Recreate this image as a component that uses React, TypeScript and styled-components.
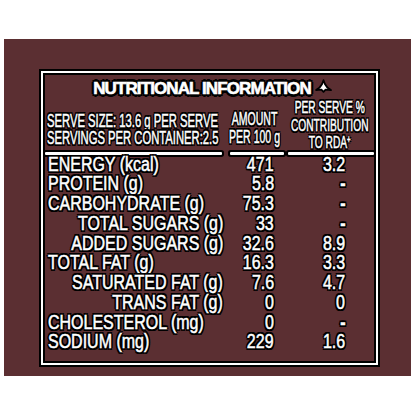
import React from "react";
import styled, { createGlobalStyle } from "styled-components";

const GlobalStyle = createGlobalStyle`
  html, body {
    margin: 0;
    padding: 0;
    background: #ffffff;
  }
`;

const BROWN = "#5b2f32";

const outline = (w: number) => {
  const d = +(w * 0.72).toFixed(2);
  return [
    `${w}px 0 #000`,
    `-${w}px 0 #000`,
    `0 ${w}px #000`,
    `0 -${w}px #000`,
    `${d}px ${d}px #000`,
    `-${d}px ${d}px #000`,
    `${d}px -${d}px #000`,
    `-${d}px -${d}px #000`,
  ].join(", ");
};

const Panel = styled.div`
  box-sizing: border-box;
  margin: 39px 0 0 4px;
  width: 407px;
  height: 337px;
  padding: 32px 0 0 37px;
  background: ${BROWN};
`;

const Frame = styled.div`
  box-sizing: border-box;
  width: 337px;
  height: 294px;
  border: 2px solid #fff;
  box-shadow: 0 0 0 2px #000, inset 0 0 0 2px #000;
  padding-top: 6px;
  display: flex;
  flex-direction: column;
  color: #fff;
  font-family: "Liberation Sans", Arial, sans-serif;
  -webkit-text-stroke: 0.5px #fff;
  text-shadow: ${outline(2.3)};
`;

const TitleRow = styled.div`
  height: 20px;
  display: flex;
  align-items: center;
  justify-content: center;
  gap: 4px;
  padding-left: 6px;
`;

const Title = styled.span`
  font-weight: 700;
  font-size: 17px;
  line-height: 20px;
  letter-spacing: -0.9px;
  -webkit-text-stroke: 0.6px #fff;
  text-shadow: ${outline(2.6)};
`;

const Grid = styled.div`
  display: grid;
  grid-template-columns: 183px 60px minmax(0, 1fr);
`;

const HeadCell = styled.div<{ $align: "left" | "center"; $pb: number }>`
  height: 52.5px;
  min-width: 0;
  display: flex;
  align-items: flex-end;
  justify-content: ${(p) => (p.$align === "left" ? "flex-start" : "center")};
  padding-left: ${(p) => (p.$align === "left" ? "4px" : "0")};
  padding-right: ${(p) => (p.$align === "left" ? "0" : "3px")};
  padding-bottom: ${(p) => p.$pb}px;
  box-sizing: border-box;
`;

const Squeeze = styled.span<{ $scale: number; $origin: string; $size: number; $lh: number }>`
  display: inline-block;
  flex: none;
  white-space: nowrap;
  text-align: ${(p) => (p.$origin === "left" ? "left" : "center")};
  font-size: ${(p) => p.$size}px;
  line-height: ${(p) => p.$lh}px;
  transform: scaleX(${(p) => p.$scale});
  transform-origin: ${(p) => p.$origin} center;
`;

const Dash = styled.span`
  font-weight: 700;
`;

const Rule = styled.div<{ $ml: number; $mr: number }>`
  height: 3px;
  margin: 0 ${(p) => p.$mr}px 0 ${(p) => p.$ml}px;
  background: #fff;
  border-radius: 1px;
  box-shadow: 0 0 0 2px #000;
`;

const Cell = styled.div<{ $align: "left" | "right"; $pl?: number; $pr?: number }>`
  min-width: 0;
  height: 19.78px;
  display: flex;
  justify-content: ${(p) => (p.$align === "left" ? "flex-start" : "flex-end")};
  padding-left: ${(p) => p.$pl ?? 0}px;
  padding-right: ${(p) => p.$pr ?? 0}px;
`;

const Mark = () => (
  <svg width="17" height="14" viewBox="0 0 17 14" style={{ marginTop: -6 }}>
    <path
      d="M8.5 1.2 L9.9 5 Q11.8 9 16 11 L10.6 10.6 L8.5 12.8 L6.4 10.6 L1 11 Q5.2 9 7.1 5 Z"
      fill="#fff"
      stroke="#000"
      strokeWidth="1.8"
      strokeLinejoin="round"
    />
  </svg>
);

type Row = { label: string; amount: string; rda: string; sub?: boolean };

const rows: Row[] = [
  { label: "ENERGY (kcal)", amount: "471", rda: "3.2" },
  { label: "PROTEIN (g)", amount: "5.8", rda: "-" },
  { label: "CARBOHYDRATE (g)", amount: "75.3", rda: "-" },
  { label: "TOTAL SUGARS (g)", amount: "33", rda: "-", sub: true },
  { label: "ADDED SUGARS (g)", amount: "32.6", rda: "8.9", sub: true },
  { label: "TOTAL FAT (g)", amount: "16.3", rda: "3.3" },
  { label: "SATURATED FAT (g)", amount: "7.6", rda: "4.7", sub: true },
  { label: "TRANS FAT (g)", amount: "0", rda: "0", sub: true },
  { label: "CHOLESTEROL (mg)", amount: "0", rda: "-" },
  { label: "SODIUM (mg)", amount: "229", rda: "1.6" },
];

const RowText = ({ children, origin }: { children: React.ReactNode; origin: string }) => (
  <Squeeze $scale={0.82} $origin={origin} $size={19.5} $lh={19.78}>
    {children}
  </Squeeze>
);

export default function App() {
  return (
    <>
      <GlobalStyle />
      <Panel>
        <Frame>
          <TitleRow>
            <Title>NUTRITIONAL INFORMATION</Title>
            <Mark />
          </TitleRow>
          <Grid>
            <HeadCell $align="left" $pb={5}>
              <Squeeze $scale={0.625} $origin="left" $size={18} $lh={17}>
                SERVE SIZE: 13.6 g PER SERVE
                <br />
                SERVINGS PER CONTAINER:2.5
              </Squeeze>
            </HeadCell>
            <HeadCell $align="center" $pb={6}>
              <Squeeze $scale={0.585} $origin="center" $size={18} $lh={18}>
                AMOUNT
                <br />
                PER 100 g
              </Squeeze>
            </HeadCell>
            <HeadCell $align="center" $pb={0}>
              <Squeeze $scale={0.6} $origin="center" $size={17} $lh={17.5}>
                PER SERVE %
                <br />
                CONTRIBUTION
                <br />
                TO RDA<sup style={{ fontSize: 10, verticalAlign: 5, lineHeight: 0 }}>+</sup>
              </Squeeze>
            </HeadCell>
            <Rule $ml={2} $mr={4} />
            <Rule $ml={4} $mr={2} />
            <Rule $ml={2} $mr={2} />
            {rows.map((r) => (
              <React.Fragment key={r.label}>
                <Cell $align={r.sub ? "right" : "left"} $pl={5} $pr={3}>
                  <RowText origin={r.sub ? "right" : "left"}>{r.label}</RowText>
                </Cell>
                <Cell $align="right" $pr={12}>
                  <RowText origin="right">{r.amount}</RowText>
                </Cell>
                <Cell $align="right" $pr={31}>
                  <RowText origin="right">
                    {r.rda === "-" ? <Dash>-</Dash> : r.rda}
                  </RowText>
                </Cell>
              </React.Fragment>
            ))}
          </Grid>
        </Frame>
      </Panel>
    </>
  );
}
